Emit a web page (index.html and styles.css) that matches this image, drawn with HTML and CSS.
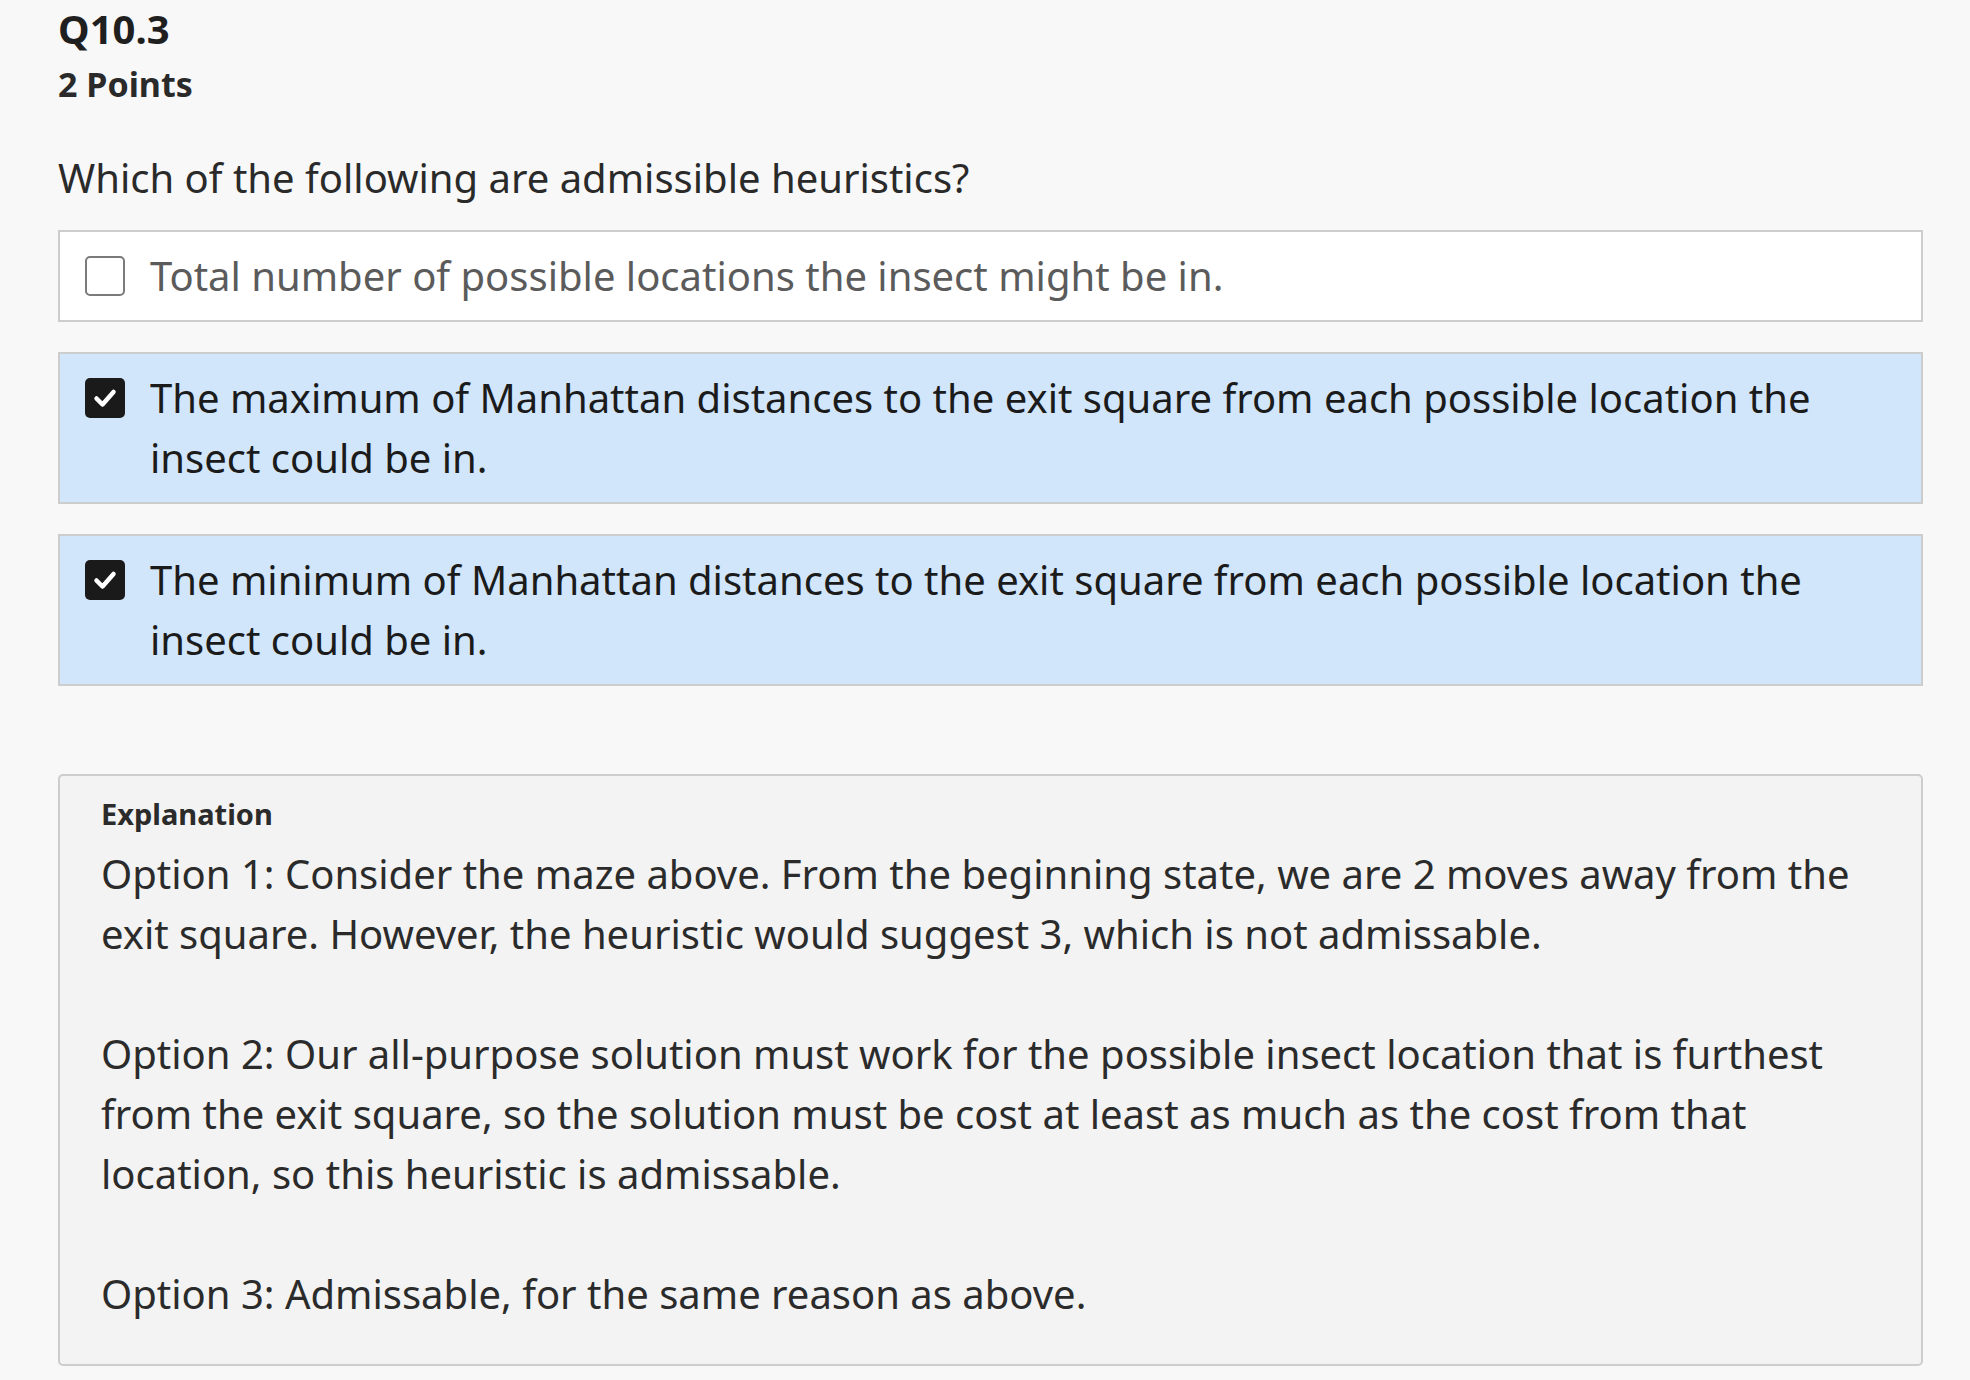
FILE: index.html
```html
<!DOCTYPE html>
<html lang="en">
<head>
<meta charset="utf-8">
<title>Q10.3</title>
<link rel="stylesheet" href="styles.css">
</head>
<body>
<main class="question">
  <h2 class="q-title">Q10.3</h2>
  <div class="q-points">2 Points</div>
  <p class="q-prompt">Which of the following are admissible heuristics?</p>

  <ul class="options">
    <li class="option">
      <span class="box"></span>
      <span class="option-text">Total number of possible locations the insect might be in.</span>
    </li>
    <li class="option option--checked">
      <span class="box box--checked"><svg viewBox="0 0 40 40" width="40" height="40"><path d="M11.5 20.5 L17.5 26.5 L28.5 14" fill="none" stroke="#fff" stroke-width="4.5" stroke-linecap="round" stroke-linejoin="round"/></svg></span>
      <span class="option-text">The maximum of Manhattan distances to the exit square from each possible location the insect could be in.</span>
    </li>
    <li class="option option--checked">
      <span class="box box--checked"><svg viewBox="0 0 40 40" width="40" height="40"><path d="M11.5 20.5 L17.5 26.5 L28.5 14" fill="none" stroke="#fff" stroke-width="4.5" stroke-linecap="round" stroke-linejoin="round"/></svg></span>
      <span class="option-text">The minimum of Manhattan distances to the exit square from each possible location the insect could be in.</span>
    </li>
  </ul>

  <section class="explanation">
    <div class="explanation-label">Explanation</div>
    <p>Option 1: Consider the maze above. From the beginning state, we are 2 moves away from the exit square. However, the heuristic would suggest 3, which is not admissable.</p>
    <p>Option 2: Our all-purpose solution must work for the possible insect location that is furthest from the exit square, so the solution must be cost at least as much as the cost from that location, so this heuristic is admissable.</p>
    <p>Option 3: Admissable, for the same reason as above.</p>
  </section>
</main>
</body>
</html>
```

FILE: styles.css
```css
html, body {
  margin: 0;
  padding: 0;
  background: #f8f8f8;
}

body {
  font-family: "Noto Sans", "Open Sans", sans-serif;
  color: #222;
}

.question {
  padding: 4px 47px 0 58px;
}

.q-title {
  margin: 0;
  font-size: 40px;
  font-weight: 700;
  line-height: 50px;
  color: #1f1f1f;
}

.q-points {
  margin-top: 10px;
  font-size: 34px;
  font-weight: 700;
  line-height: 40px;
  color: #2a2a2a;
}

.q-prompt {
  margin: 44px 0 22px;
  font-size: 40px;
  line-height: 60px;
  color: #2a2a2a;
}

.options {
  list-style: none;
  margin: 0;
  padding: 0;
  display: flex;
  flex-direction: column;
  gap: 30px;
}

.option {
  display: flex;
  align-items: flex-start;
  gap: 25px;
  padding: 14px 25px 14px 25px;
  border: 2px solid #cdcdcd;
  background: #fff;
  font-size: 40px;
  line-height: 60px;
  color: #5b5b5b;
}

.option--checked {
  background: #d1e6fa;
  color: #1b1b1b;
}

.box {
  flex: 0 0 40px;
  width: 40px;
  height: 40px;
  margin-top: 10px;
  box-sizing: border-box;
  border: 2px solid #7b7b7b;
  border-radius: 5px;
  background: #fff;
}

.box--checked {
  border: none;
  background: #1a1a1a;
}

.box svg {
  display: block;
}

.explanation {
  margin-top: 88px;
  padding: 15px 41px 40px 41px;
  border: 2px solid #cdcdcd;
  border-radius: 5px;
  background: #f3f3f3;
  color: #2b2b2b;
}

.explanation-label {
  font-size: 29px;
  font-weight: 700;
  line-height: 45px;
  margin-bottom: 8px;
}

.explanation p {
  margin: 0 0 60px;
  font-size: 40px;
  line-height: 60px;
}

.explanation p:last-child {
  margin-bottom: 0;
}
```
